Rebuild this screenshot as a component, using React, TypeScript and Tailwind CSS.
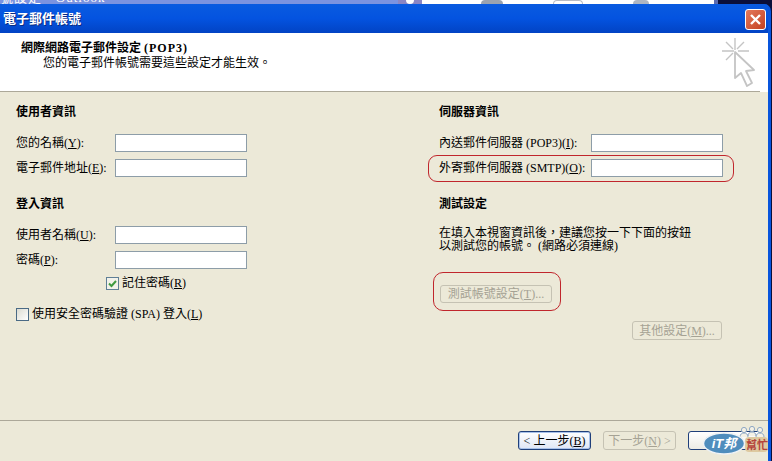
import React from "react";

const stack = "font-['Liberation_Serif','Noto_Sans_CJK_TC',serif]";

const Field = ({ label, hot, wide }: { label: string; hot: string; wide?: boolean }) => (
  <div className="flex items-center h-[18px]">
    <span className={`shrink-0 text-[12px] leading-[18px] text-black whitespace-nowrap ${wide ? "w-[152px]" : "w-[99px]"}`}>
      {label}
      <span className="underline">{hot}</span>
      {"):"}
    </span>
    <div className="shrink-0 w-[132px] h-[18px] bg-white border border-[#8d9da8]" />
  </div>
);

const Heading = ({ children }: { children: React.ReactNode }) => (
  <div className="text-[12px] leading-[14px] font-bold text-black">{children}</div>
);

const XpButton = ({ children, className }: { children: React.ReactNode; className: string }) => (
  <div
    className={`flex items-center justify-center rounded-[3px] border text-[12px] leading-none whitespace-nowrap ${className}`}
  >
    {children}
  </div>
);

const CursorIcon = () => (
  <svg width="36" height="50" viewBox="0 0 36 50" fill="none" className="mt-[5px]">
    <g stroke="#c4c4c4" strokeWidth="1.4">
      <path d="M13 0v12M0 13h12M16 13h11M4 4l7 7M22 4l-7 7M4 22l7-7" />
    </g>
    <path d="M13 14v26l6-5 6 13 5-3-6-12 8-1z" fill="#fff" stroke="#c4c4c4" strokeWidth="1.8" strokeLinejoin="round" />
  </svg>
);

const ItLogo = () => (
  <svg width="66" height="32" viewBox="0 0 66 32" className="absolute right-[-1px] top-[4px]">
    <g fill="#f4f1e6" stroke="#8fa8c4" strokeWidth="1">
      <circle cx="41" cy="5" r="2.6" />
      <circle cx="49" cy="4" r="2.6" />
      <circle cx="57" cy="5" r="2.6" />
      <path d="M37 12c0-3 2-4 4-4s4 1 4 4M45 11c0-3 2-4 4-4s4 1 4 4M53 12c0-3 2-4 4-4s4 1 4 4" />
    </g>
    <rect x="42" y="12" width="23" height="15" rx="4" fill="#ddc9a0" />
    <ellipse cx="21" cy="18.5" rx="20.5" ry="10.5" fill="#4f8dbd" stroke="#eef2f6" strokeWidth="1.5" />
    <text x="21" y="23" textAnchor="middle" fontSize="13" fontWeight="700" fontStyle="italic" fill="#fff" fontFamily="'Liberation Sans','Noto Sans CJK TC',sans-serif">iT邦</text>
    <text x="54" y="24" textAnchor="middle" fontSize="11" fontWeight="700" fill="#b5423a" fontFamily="'Noto Sans CJK TC',sans-serif">幫忙</text>
  </svg>
);

export default function App() {
  return (
    <div className={`relative w-[772px] h-[461px] overflow-hidden flex flex-col bg-[#0a0f3a] ${stack}`}>
      {/* peek of the window behind */}
      <div className="h-[4px] shrink-0 flex overflow-hidden">
        <div className="w-[398px] bg-[#7b93e0] overflow-hidden">
          <div className="-mt-[10px] text-[13px] leading-[15px] tracking-[1px] text-white whitespace-nowrap">號設定 - Outlook</div>
        </div>
        <div className="w-[24px] bg-[#8a86c4] flex justify-center">
          <div className="w-[8px] h-[4px] bg-white rounded-b-full" />
        </div>
        <div className="w-[292px] bg-white flex pl-[59px]">
          <div className="w-[22px] h-[4px] bg-[#9aa3b0] rounded-t-[6px]" />
          <div className="ml-[50px] w-[30px] h-[4px] border-t border-x border-[#b8bcc4] rounded-t-[5px]" />
          <div className="ml-[50px] w-[16px] h-[4px] bg-[#aeb6c2] rounded-t-[6px]" />
        </div>
        <div className="w-[4px] bg-[#5a6bb0]" />
      </div>

      <div className="flex-1 mr-[1px] flex flex-col rounded-tr-[7px] overflow-hidden bg-[#0855dd] pr-[3px]">
        {/* title bar */}
        <div className="h-[29px] shrink-0 flex items-center justify-between pl-[3px] pr-[2px] bg-gradient-to-b from-[#0a5be0] via-[#0453e0] to-[#0243c4]">
          <span className="text-[13px] font-bold text-white [text-shadow:1px_1px_0_#0a2a80] mt-[1px]">電子郵件帳號</span>
          <div className="mt-[2px] w-[21px] h-[21px] rounded-[3px] border border-white bg-gradient-to-br from-[#e3795c] to-[#c4401f] flex items-center justify-center">
            <svg width="13" height="13" viewBox="0 0 13 13">
              <path d="M2 2l9 9M11 2l-9 9" stroke="#fff" strokeWidth="2.4" />
            </svg>
          </div>
        </div>

        {/* header band */}
        <div className="h-[59px] shrink-0 bg-white flex flex-col">
          <div className="flex-1 flex justify-between">
            <div className="pl-[21px] pt-[8px]">
              <div className="text-[12px] leading-[15px] font-bold text-black">
                網際網路電子郵件設定 <span className="tracking-[1px]">(POP3)</span>
              </div>
              <div className="pl-[22px] text-[12px] leading-[15px] text-black">您的電子郵件帳號需要這些設定才能生效。</div>
            </div>
            <div className="pr-[10px]">
              <CursorIcon />
            </div>
          </div>
          <div className="h-px mr-[8px] bg-[#aca899]" />
        </div>

        {/* body */}
        <div className="flex-1 bg-[#ece9d8] flex flex-col">
          <div className="flex-1 flex pl-[16px] pt-[13px]">
            <div className="w-[412px] shrink-0">
              <Heading>使用者資訊</Heading>
              <div className="mt-[15px] flex flex-col gap-[7px]">
                <Field label="您的名稱(" hot="Y" />
                <Field label="電子郵件地址(" hot="E" />
              </div>
              <div className="mt-[20px]">
                <Heading>登入資訊</Heading>
              </div>
              <div className="mt-[15px] flex flex-col gap-[7px]">
                <Field label="使用者名稱(" hot="U" />
                <Field label="密碼(" hot="P" />
              </div>
              <div className="mt-[7px] ml-[90px] flex items-center gap-[3px] h-[14px] text-[12px] text-black">
                <div className="w-[13px] h-[13px] border border-[#5f7f96] bg-[#f2f2ea] flex items-center justify-center">
                  <svg width="9" height="9" viewBox="0 0 9 9">
                    <path d="M1 4.5l2.5 2.5L8 2" fill="none" stroke="#3f9a3f" strokeWidth="2" />
                  </svg>
                </div>
                <span>
                  記住密碼(<span className="underline">R</span>)
                </span>
              </div>
              <div className="mt-[17px] flex items-center gap-[3px] h-[14px] text-[12px] text-black">
                <div className="w-[13px] h-[13px] border border-[#4a6a85] bg-gradient-to-br from-[#dcdcd2] to-white" />
                <span>
                  使用安全密碼驗證 (SPA) 登入(<span className="underline">L</span>)
                </span>
              </div>
            </div>

            <div className="w-[300px] pl-[11px] shrink-0">
              <Heading>伺服器資訊</Heading>
              <div className="relative mt-[15px] flex flex-col gap-[7px]">
                <Field label="內送郵件伺服器 (POP3)(" hot="I" wide />
                <Field label="外寄郵件伺服器 (SMTP)(" hot="O" wide />
                <div className="absolute left-[-11px] top-[21px] w-[306px] h-[27px] rounded-[9px] border border-[#c0262c]" />
              </div>
              <div className="mt-[20px]">
                <Heading>測試設定</Heading>
              </div>
              <div className="mt-[16px] text-[12px] leading-[13px] text-black whitespace-nowrap">
                <div>在填入本視窗資訊後，建議您按一下下面的按鈕</div>
                <div>以測試您的帳號。 (網路必須連線)</div>
              </div>
              <div className="relative mt-[32px] ml-[1px] w-[112px] h-[18px]">
                <XpButton className="w-full h-[18px] border-[#c5c2b3] text-[#a5a294]">
                  測試帳號設定(<span className="underline">T</span>)...
                </XpButton>
                <div className="absolute left-[-7px] top-[-13px] w-[128px] h-[39px] rounded-[10px] border border-[#c0262c]" />
              </div>
              <div className="mt-[18px] ml-[193px] w-[90px]">
                <XpButton className="w-full h-[19px] border-[#c5c2b3] text-[#a5a294]">
                  其他設定(<span className="underline">M</span>)...
                </XpButton>
              </div>
            </div>
          </div>

          {/* footer */}
          <div className="relative h-[41px] shrink-0 border-t border-[#aca899] flex pl-[518px] pt-[10px] gap-[12px]">
            <XpButton className="w-[73px] h-[19px] border-[#1f3f7a] bg-gradient-to-b from-white to-[#dfe6f5] text-black shadow-[inset_0_0_0_1px_#a9c2ea]">
              &lt; 上一步(<span className="underline">B</span>)
            </XpButton>
            <XpButton className="w-[73px] h-[19px] border-[#c5c2b3] text-[#a5a294]">
              下一步(<span className="underline">N</span>) &gt;
            </XpButton>
            <div className="w-[73px] h-[19px] rounded-[3px] border border-[#1f3f7a] bg-gradient-to-b from-white to-[#ecebe5]" />
            <ItLogo />
          </div>
        </div>
      </div>
    </div>
  );
}
